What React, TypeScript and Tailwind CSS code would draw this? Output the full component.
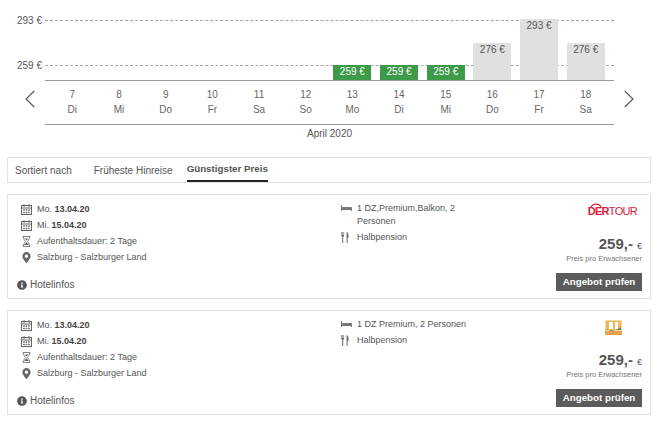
import React from "react";
import { FaMapMarkerAlt, FaInfoCircle } from "react-icons/fa";

const days = [
  ["7", "Di"], ["8", "Mi"], ["9", "Do"], ["10", "Fr"], ["11", "Sa"], ["12", "So"],
  ["13", "Mo"], ["14", "Di"], ["15", "Mi"], ["16", "Do"], ["17", "Fr"], ["18", "Sa"],
];
const bars: Record<number, { h: number; t: string; green?: boolean }> = {
  6: { h: 15, t: "259 €", green: true },
  7: { h: 15, t: "259 €", green: true },
  8: { h: 15, t: "259 €", green: true },
  9: { h: 37, t: "276 €" },
  10: { h: 61, t: "293 €" },
  11: { h: 37, t: "276 €" },
};

function Cal() {
  return (
    <svg width="11" height="11" viewBox="0 0 11 11" fill="none" stroke="#666" strokeWidth="1">
      <rect x="0.5" y="1.5" width="10" height="9" />
      <path d="M0.5 4h10M3 0v3M8 0v3" />
      <path d="M2.5 5.5h1v1h-1zM5 5.5h1v1H5zM7.5 5.5h1v1h-1zM2.5 8h1v1h-1zM5 8h1v1H5zM7.5 8h1v1h-1z" strokeWidth="0.7" />
    </svg>
  );
}
function Hourglass() {
  return (
    <svg width="11" height="11" viewBox="0 0 11 11" fill="#666">
      <path d="M2 0.5h7v1H8.4c0 2.2-1.3 3-2 4 .7 1 2 1.8 2 4H9v1H2v-1h.6c0-2.2 1.3-3 2-4-.7-1-2-1.8-2-4H2z" fill="none" stroke="#666" strokeWidth="0.8" />
      <path d="M3 8.9h5L5.5 6.2zM3.6 2.6h3.8L5.5 4.6z" />
    </svg>
  );
}
function Bed() {
  return (
    <svg width="11" height="7" viewBox="0 0 11 7" fill="#777">
      <path d="M0 0h1v2.5h10V6h-1V5H1v1H0z" />
      <rect x="1.5" y="2" width="9" height="1.5" />
    </svg>
  );
}
function Cutlery() {
  return (
    <svg width="8" height="11" viewBox="0 0 8 11" fill="#666">
      <path d="M0.3 0h.6v3h.5V0h.6v3h.5V0h.6v3.6c0 .6-.5 1-.9 1.1V11H1.2V4.7C.8 4.6.3 4.2.3 3.6z" />
      <path d="M5.6 0C7 .4 7.6 2 7.6 4.5c0 1-.4 1.6-1 1.7V11H5.6z" />
    </svg>
  );
}
function Row({ icon, children }: { icon: React.ReactNode; children: React.ReactNode }) {
  return (
    <div className="flex h-4 items-center">
      <span className="flex w-[11px] justify-center">{icon}</span>
      <span className="ml-[5px]">{children}</span>
    </div>
  );
}
function Dertour() {
  return (
    <div className="relative flex h-[14px] items-end text-[11px] leading-[13px] tracking-[-0.7px] text-[#d4213d]">
      <svg className="absolute left-[2px] top-[-1px]" width="12" height="5" viewBox="0 0 14 5" fill="none" stroke="#d4213d" strokeWidth="1.4">
        <path d="M1 5C2 1.5 4 .8 7 .8s5 .7 6 4.2" />
      </svg>
      <span className="font-bold">DER</span>
      <span className="font-normal">TOUR</span>
    </div>
  );
}
function Fti() {
  return (
    <svg width="17" height="15" viewBox="0 0 17 15">
      <rect width="17" height="15" fill="#f4d9a6" />
      <rect x="1" y="1" width="15" height="9" fill="#f3b65a" />
      <rect x="4" y="2" width="4" height="7" fill="#fff" />
      <rect x="10" y="2" width="3" height="7" fill="#fff" />
      <path d="M1 9l5 2 5-1 5-3v3H1z" fill="#4f8f7a" />
      <rect y="11" width="17" height="4" fill="#ef9f45" />
    </svg>
  );
}
function Card({ room, logo, logoClass }: { room: React.ReactNode; logo: React.ReactNode; logoClass: string }) {
  return (
    <div className="mx-[7px] flex h-[105px] w-[644px] border border-[#e2e2e2] text-[9px] leading-[16px] text-[#555]">
      <div className="flex w-[333px] flex-col pl-[9px] pt-[6px]">
        <div className="ml-[4px]">
          <Row icon={<Cal />}>Mo. <b className="font-bold text-[#444]">13.04.20</b></Row>
          <Row icon={<Cal />}>Mi. <b className="font-bold text-[#444]">15.04.20</b></Row>
          <Row icon={<Hourglass />}>Aufenthaltsdauer: 2 Tage</Row>
          <Row icon={<FaMapMarkerAlt size={11} color="#666" />}>Salzburg - Salzburger Land</Row>
        </div>
        <div className="mt-[12px] flex h-4 items-center">
          <FaInfoCircle size={10} color="#555" />
          <span className="ml-[3px] text-[10px]">Hotelinfos</span>
        </div>
      </div>
      <div className="w-[125px] pt-[6px]">{room}</div>
      <div className="flex flex-1 flex-col items-end pr-[8px]">
        <div className={logoClass}>{logo}</div>
        <div className="mt-auto flex items-baseline text-[#555]">
          <span className="text-[15px] font-bold leading-[13px]">259,-</span>
          <span className="ml-[4px] text-[9px] leading-[13px]">€</span>
        </div>
        <div className="text-[7.5px] leading-[12px] text-[#777]">Preis pro Erwachsener</div>
        <button className="mb-[7px] mt-[8px] flex h-[18px] w-[86px] items-center justify-center bg-[#5b5b5b] text-[9.75px] font-bold text-white">
          Angebot prüfen
        </button>
      </div>
    </div>
  );
}

export default function App() {
  return (
    <div className="h-[421px] w-[665px] overflow-hidden bg-white" style={{ fontFamily: '"Liberation Sans", Arial, sans-serif' }}>
      <div className="flex h-[157px] flex-col">
        <div className="flex">
          <div className="relative w-[45px] text-[10px] text-[#555]">
            <span className="absolute right-[3px] top-[15px] leading-[12px]">293 €</span>
            <span className="absolute right-[3px] top-[60px] leading-[12px]">259 €</span>
          </div>
          <div className="relative h-[81px] w-[569px] border-b border-[#999]">
            <div className="absolute left-0 right-0 top-[20px] border-t border-dashed border-[#a5a5a5]" />
            <div className="absolute left-0 right-0 top-[65px] border-t border-dashed border-[#a5a5a5]" />
            <div className="absolute inset-0 flex items-end pl-[4px] pr-[5px]">
              {days.map((_, i) => (
                <div key={i} className="flex flex-1 justify-center">
                  {bars[i] && (
                    <div
                      className={`w-[38px] pt-[1px] text-center text-[10px] leading-[11px] ${bars[i].green ? "bg-[#3d9a48] text-white" : "bg-[#e0e0e0] text-[#555]"}`}
                      style={{ height: bars[i].h }}
                    >
                      {bars[i].t}
                    </div>
                  )}
                </div>
              ))}
            </div>
          </div>
        </div>
        <div className="flex">
          <div className="flex w-[45px] items-start pl-[25px] pt-[9px]">
            <svg width="10" height="18" viewBox="0 0 10 18" fill="none" stroke="#555" strokeWidth="1.1">
              <path d="M9.2 1L1 9l8.2 8" />
            </svg>
          </div>
          <div className="flex h-[44px] w-[569px] items-center border-b border-[#999] pl-[4px] pr-[5px] pb-[1px] text-[10px] leading-[15px] text-[#666]">
            {days.map(([n, d], i) => (
              <div key={i} className="flex-1 text-center">
                <div>{n}</div>
                <div>{d}</div>
              </div>
            ))}
          </div>
          <div className="flex flex-1 items-start pl-[10px] pt-[9px]">
            <svg width="10" height="18" viewBox="0 0 10 18" fill="none" stroke="#555" strokeWidth="1.1">
              <path d="M0.8 1L9 9l-8.2 8" />
            </svg>
          </div>
        </div>
        <div className="mt-[3px] w-[614px] pl-[45px] text-center text-[10px] leading-[12px] text-[#555]">April 2020</div>
      </div>
      <div className="mx-[7px] flex h-[26px] w-[644px] border border-[#e2e2e2] pl-[7px] text-[10px] text-[#555]">
        <div className="flex items-center">Sortiert nach</div>
        <div className="ml-[22px] flex items-center">Früheste Hinreise</div>
        <div className="ml-[14px] flex items-center border-b-2 border-[#222] pt-[1px] text-[9.75px] font-bold">Günstigster Preis</div>
      </div>
      <div className="mt-[11px] flex flex-col gap-[11px]">
        <Card
          logoClass="mt-[9px] mr-[5px]"
          logo={<Dertour />}
          room={
            <div>
              <div className="flex">
                <span className="mt-[4px] flex w-[11px] shrink-0"><Bed /></span>
                <span className="ml-[5px] pt-[1px] leading-[13px]">1 DZ,Premium,Balkon, 2 Personen</span>
              </div>
              <div className="mt-[1px] flex h-4 items-center">
                <span className="flex w-[11px]"><Cutlery /></span>
                <span className="ml-[5px]">Halbpension</span>
              </div>
            </div>
          }
        />
        <Card
          logoClass="mt-[9px] mr-[20px]"
          logo={<Fti />}
          room={
            <div className="mt-[-1px]">
              <div className="flex h-4 items-center whitespace-nowrap">
                <span className="flex w-[11px] shrink-0"><Bed /></span>
                <span className="ml-[5px]">1 DZ Premium, 2 Personen</span>
              </div>
              <div className="flex h-4 items-center">
                <span className="flex w-[11px]"><Cutlery /></span>
                <span className="ml-[5px]">Halbpension</span>
              </div>
            </div>
          }
        />
      </div>
    </div>
  );
}
